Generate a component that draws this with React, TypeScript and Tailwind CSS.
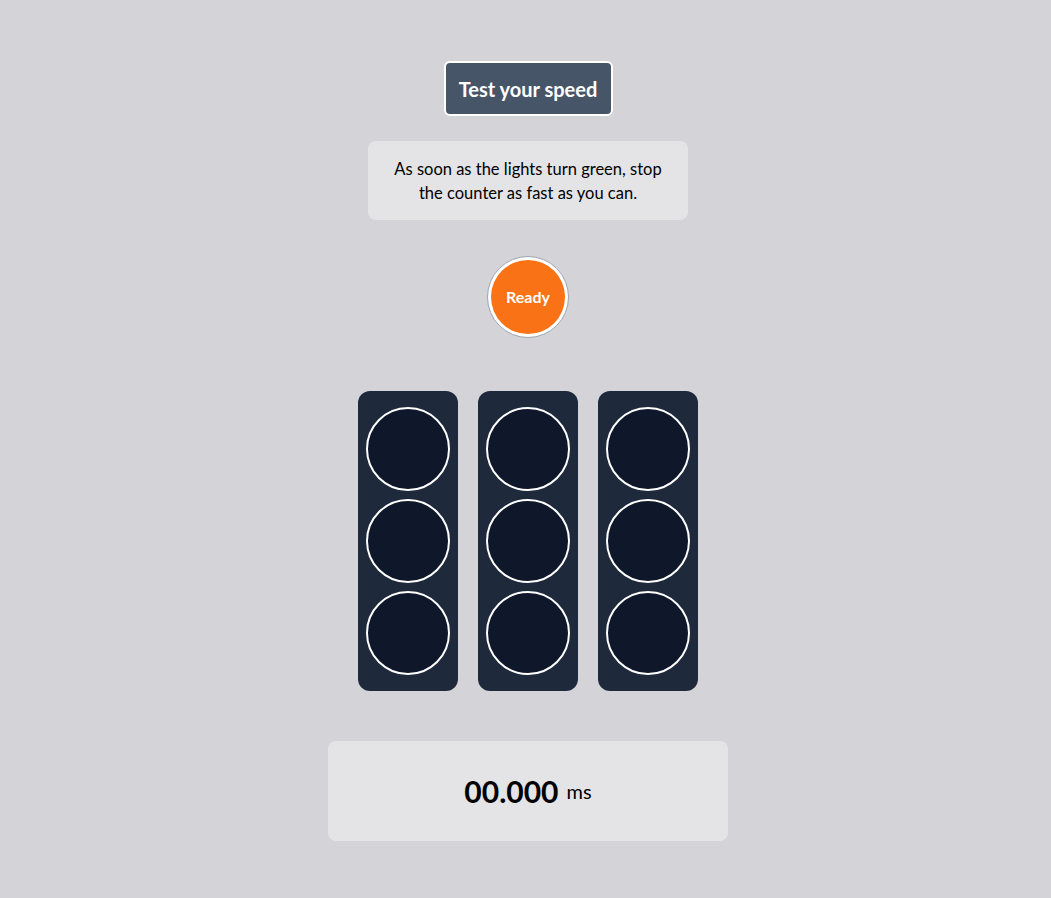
import React from "react";

const Light: React.FC = () => (
  <div className="w-[84px] h-[84px] rounded-full border-2 border-white bg-[#0f172a]" />
);

const Column: React.FC = () => (
  <div className="flex flex-col gap-2 px-2 py-4 w-[100px] h-[300px] rounded-xl bg-[#1e293b]">
    <Light />
    <Light />
    <Light />
  </div>
);

const App: React.FC = () => {
  return (
    <div
      className="min-h-[898px] w-full bg-[#d4d4d8] flex flex-col items-center pt-[61px] pl-[5px]"
      style={{ fontFamily: "Lato, 'Noto Sans', sans-serif" }}
    >
      <button className="h-[55px] w-[169px] bg-[#475569] border-2 border-white rounded-md text-white text-[20px] font-bold">
        Test your speed
      </button>

      <div className="mt-[25px] w-[320px] h-[79px] bg-[#e4e4e7] rounded-lg flex items-center justify-center px-5 text-center text-[16.5px] leading-6 text-black">
        As soon as the lights turn green, stop the counter as fast as you can.
      </div>

      <div className="mt-[36px] w-[82px] h-[82px] rounded-full border border-[#9ca3af] bg-white p-[3px]">
        <div className="w-full h-full rounded-full bg-[#f97316] flex items-center justify-center text-white font-bold text-[16px]">
          Ready
        </div>
      </div>

      <div className="mt-[53px] flex gap-5">
        <Column />
        <Column />
        <Column />
      </div>

      <div className="mt-[50px] w-[400px] h-[100px] bg-[#e4e4e7] rounded-lg flex items-center justify-center gap-2">
        <span className="text-[30px] font-bold text-black">00.000</span>
        <span className="text-[20px] text-black">ms</span>
      </div>
    </div>
  );
};

export default App;
